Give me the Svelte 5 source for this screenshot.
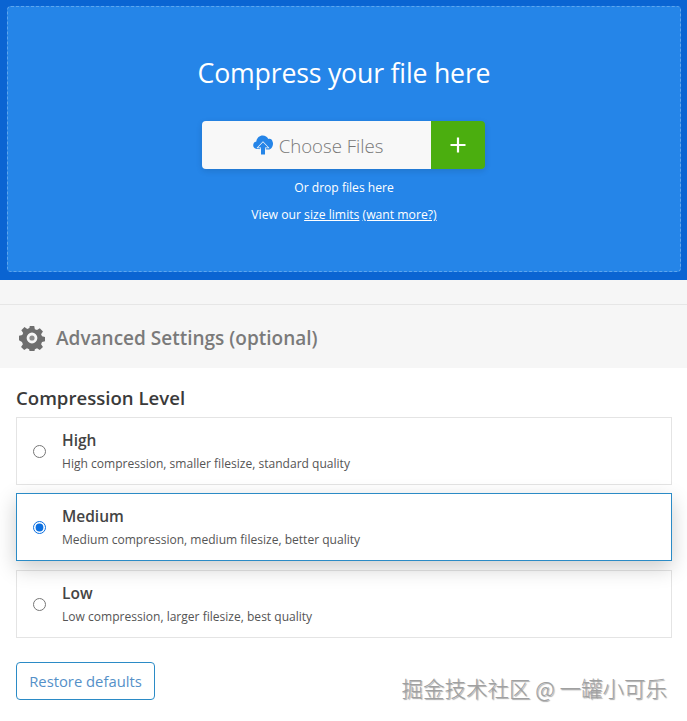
<script>
  const levels = [
    { name: 'High', desc: 'High compression, smaller filesize, standard quality' },
    { name: 'Medium', desc: 'Medium compression, medium filesize, better quality' },
    { name: 'Low', desc: 'Low compression, larger filesize, best quality' }
  ];
  let level = $state('Medium');
</script>

<div class="page">
  <section class="hero">
    <div class="drop">
      <h1>Compress your file here</h1>
      <div class="picker">
        <button class="choose">
          <svg class="cloud" viewBox="0 0 20 20" width="20" height="20" aria-hidden="true">
            <path fill="#2585e8" d="M4.200 14C1.900 14 .2 12.300.2 10.200c0-1.900 1.300-3.400 3.100-3.800C3.900 2.900 6.500.6 9.700.6c2.500 0 4.600 1.300 5.600 3.400.4-.1.800-.2 1.200-.2 1.600 0 2.800 1.200 3 2.700.3.600.5 1.300.5 2 0 3.300-1.800 6-4.600 6z"/>
            <path fill="#2585e8" stroke="#f8f8f8" stroke-width="1.400" paint-order="stroke" d="M10 7.200l-5 5.300h3v7h4v-7h3z"/>
          </svg>
          <span>Choose Files</span>
        </button>
        <button class="add" aria-label="Add">
          <svg viewBox="0 0 16 16" width="16" height="16" aria-hidden="true">
            <path d="M8 .5v15M.5 8h15" stroke="#fff" stroke-width="2.200" fill="none"/>
          </svg>
        </button>
      </div>
      <p class="hint">Or drop files here</p>
      <p class="limits">View our <a href="#limits">size limits</a> <a href="#more">(want more?)</a></p>
    </div>
  </section>

  <section class="advanced">
    <div class="adv-head">
      <svg viewBox="0 0 28 28" width="26" height="26" aria-hidden="true">
        <path fill="#6e6e6e" fill-rule="evenodd" d="M11.600 1h4.800l.7 3.500 2.300 1 3-2 3.400 3.400-2 3 1 2.300 3.200.6v4.800l-3.200.7-1 2.300 2 3-3.400 3.400-3-2-2.300 1-.7 3.200h-4.800l-.7-3.200-2.300-1-3 2-3.400-3.400 2-3-1-2.300L0 16.400v-4.800l3.500-.7 1-2.300-2-3 3.400-3.400 3 2 2.300-1zM14 8.200a5.800 5.800 0 1 0 0 11.600 5.800 5.800 0 0 0 0-11.600z"/>
        <circle cx="14" cy="14" r="2.800" fill="#8c8c8c"/>
      </svg>
      <h2>Advanced Settings (optional)</h2>
    </div>
  </section>

  <section class="settings">
    <h3>Compression Level</h3>
    <div class="options">
      {#each levels as l}
        <label class="option" class:active={level === l.name}>
          <input type="radio" name="level" value={l.name} bind:group={level} />
          <span class="text">
            <strong>{l.name}</strong>
            <small>{l.desc}</small>
          </span>
        </label>
      {/each}
    </div>
    <button class="restore">Restore defaults</button>
  </section>

  <div class="watermark">掘金技术社区 @ 一罐小可乐</div>
</div>

<style>
  :global(body) { margin: 0; background: #fff; }
  .page {
    position: relative; width: 687px; height: 721px; overflow: hidden;
    font-family: "Open Sans", "Noto Sans", sans-serif; color: #333;
  }
  .hero { background: #0a64d2; padding: 6px 6px 8px 7px; height: 266px; }
  .drop {
    height: 264px; background: #2585e8; border: 1px dashed #5fa5ec; border-radius: 4px;
    display: flex; flex-direction: column; align-items: center; color: #fff;
  }
  h1 { margin: 46px 0 0; font-size: 26.700px; line-height: 40px; font-weight: 400; letter-spacing: -.2px; }
  .picker { display: flex; margin: 28px 2px 0 0; box-shadow: 0 2px 6px rgba(0,0,0,.12); border-radius: 4px; }
  button { font-family: inherit; cursor: pointer; }
  .choose {
    width: 229px; height: 48px; border: 0; background: #f8f8f8; border-radius: 4px 0 0 4px;
    display: flex; align-items: center; justify-content: center; gap: 6px; padding: 0 0 0 4px;
    color: #777; font-size: 18.600px; font-weight: 300;
  }
  .add {
    width: 54px; height: 48px; border: 0; background: #4bae0f; border-radius: 0 4px 4px 0;
    display: flex; align-items: center; justify-content: center; padding: 0;
  }
  .hint { margin: 10px 0 0; font-size: 12.100px; line-height: 18px; }
  .limits { margin: 9px 0 0; font-size: 12.200px; line-height: 18px; }
  .limits a { color: #fff; text-decoration: underline; }

  .advanced { height: 88px; background: #f6f6f6; padding-top: 24px; box-sizing: border-box; }
  .adv-head {
    border-top: 1px solid #e6e6e6; height: 64px; padding: 2px 0 0 19px; box-sizing: border-box;
    display: flex; align-items: center; gap: 11px;
  }
  h2 { margin: 0; font-size: 19px; font-weight: 600; color: #7a7a7a; }

  .settings { padding: 17px 15px 0 16px; }
  h3 { margin: 0; font-size: 18.600px; line-height: 26px; font-weight: 600; color: #3a3a3a; }
  .options { display: flex; flex-direction: column; gap: 8px; margin-top: 6px; }
  .option {
    height: 68px; box-sizing: border-box; border: 1px solid #e4e4e4; background: #fff;
    display: flex; align-items: center; padding-left: 16px; gap: 16px;
  }
  .option:last-child { margin-top: 1px; }
  .option.active {
    border-color: #2b8bc6; position: relative; z-index: 1;
    box-shadow: 0 7px 20px rgba(0,0,0,.2);
  }
  input { margin: 0; width: 13px; height: 13px; accent-color: #0b6fe0; }
  .text { display: flex; flex-direction: column; padding-top: 2px; }
  strong { font-size: 15.500px; line-height: 22px; font-weight: 600; color: #444; }
  small { font-size: 12.050px; line-height: 22px; margin-top: 2px; color: #555; }
  .restore {
    margin-top: 24px; width: 139px; height: 38px; background: #fff; border: 1px solid #2b8bc6;
    border-radius: 4px; color: #5490c8; font-size: 14.800px; padding: 0;
  }
  .watermark {
    position: absolute; right: 20px; top: 674px; font-size: 21.500px; line-height: 28px; color: #a0a0a0;
    font-family: "Noto Sans CJK SC", "Noto Sans", sans-serif; font-weight: 300;
    text-shadow: 1px 1px 1px rgba(0,0,0,.35);
  }
</style>
